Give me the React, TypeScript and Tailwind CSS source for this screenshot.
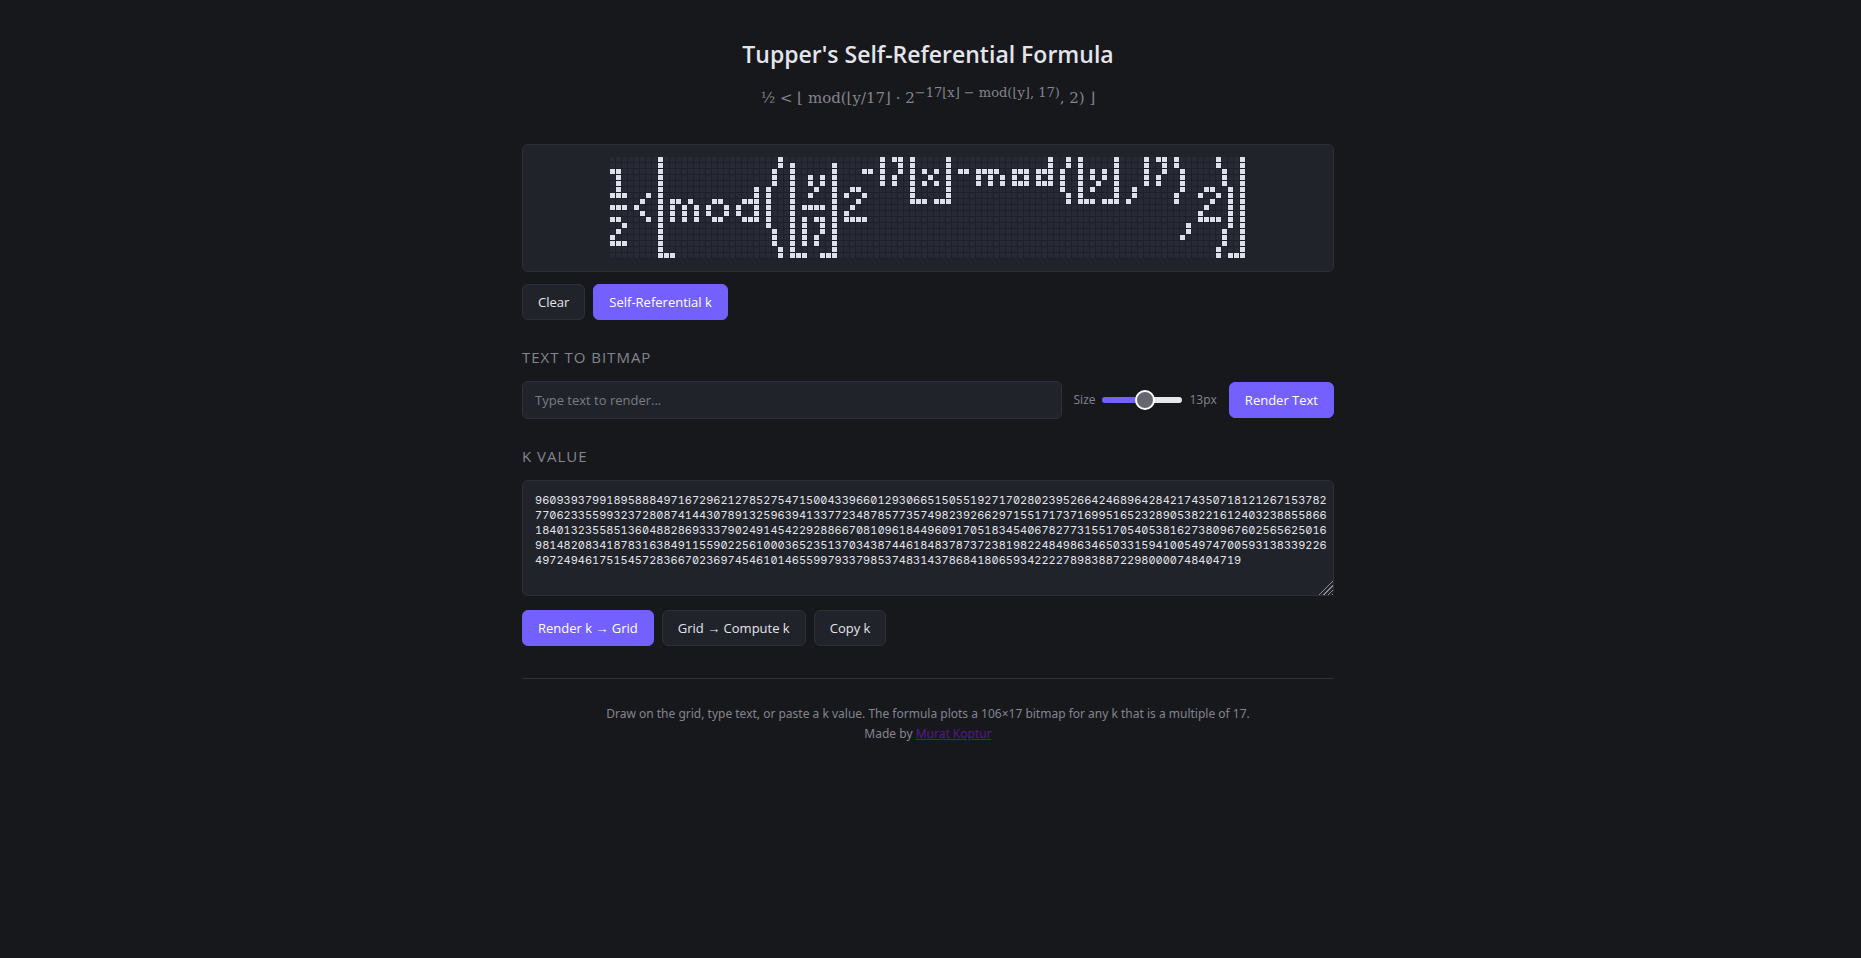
import { useState } from "react"

const COLS = 106
const ROWS = 17
const CELL = 6

const SELF_K = [
    "960939379918958884971672962127852754715004339660129306651505519271702802395266424689642842174350718121267153782",
    "770623355993237280874144307891325963941337723487857735749823926629715517173716995165232890538221612403238855866",
    "184013235585136048828693337902491454229288667081096184496091705183454067827731551705405381627380967602565625016",
    "981482083418783163849115590225610003652351370343874461848378737238198224849863465033159410054974700593138339226",
    "497249461751545728366702369745461014655997933798537483143786841806593422227898388722980000748404719",
].join("")

// bit (17 * x + y) of k / 17 is one pixel, columns run right to left
function decode(k: string): boolean[] {
    const cells: boolean[] = new Array(COLS * ROWS).fill(false)
    let n = BigInt(k.replace(/\D/g, "") || "0") / 17n
    for (let i = 0; i < COLS * ROWS; i++) {
        const col = COLS - 1 - Math.floor(i / ROWS)
        cells[(i % ROWS) * COLS + col] = (n & 1n) === 1n
        n >>= 1n
    }
    return cells
}

function encode(cells: boolean[]): string {
    let n = 0n
    for (let i = COLS * ROWS - 1; i >= 0; i--) {
        const col = COLS - 1 - Math.floor(i / ROWS)
        n = (n << 1n) | (cells[(i % ROWS) * COLS + col] ? 1n : 0n)
    }
    return (n * 17n).toString()
}

const baseButton = "h-9 px-[15px] rounded-md border text-[13px] leading-5 cursor-pointer whitespace-nowrap"
const plainButton = `${baseButton} border-[#2e3038] bg-[#20232a] text-[#e4e4ec]`
const accentButton = `${baseButton} border-[#7460ff] bg-[#7460ff] text-white`
const heading = "mt-[25px] text-[15px] leading-6 tracking-[1px] uppercase text-[#84848f]"

export default function App() {
    const [k, setK] = useState(SELF_K)
    const [cells, setCells] = useState(() => decode(SELF_K))
    const [text, setText] = useState("")
    const [size, setSize] = useState(13)

    function toggle(index: number) {
        setCells(cells.map((on, i) => (i === index ? !on : on)))
    }

    function loadSelf() {
        setK(SELF_K)
        setCells(decode(SELF_K))
    }

    function renderText() {
        const canvas = document.createElement("canvas")
        canvas.width = COLS
        canvas.height = ROWS
        const ctx = canvas.getContext("2d")
        if (!ctx) return
        ctx.font = `${size}px sans-serif`
        ctx.textBaseline = "middle"
        ctx.textAlign = "center"
        ctx.fillText(text, COLS / 2, ROWS / 2)
        const data = ctx.getImageData(0, 0, COLS, ROWS).data
        const next = cells.map((_, i) => data[i * 4 + 3] > 100)
        setCells(next)
        setK(encode(next))
    }

    const percent = ((size - 8) / 9) * 100

    return (
        <div className="min-h-screen bg-[#17181c] pr-[5px] font-['Open_Sans','Noto_Sans',sans-serif] text-[#e4e4ec]">
            <main className="mx-auto max-w-[860px] px-6 pt-9">
                <header className="text-center">
                    <h1 className="text-[23px] leading-9 font-semibold">Tupper's Self-Referential Formula</h1>
                    <p className="mt-3 font-['DejaVu_Serif',serif] text-[15px] leading-7 text-[#84848f]">
                        ½ &lt; ⌊ mod(⌊y/17⌋ · 2<sup className="text-[13px]">−17⌊x⌋ − mod(⌊y⌋, 17)</sup>, 2) ⌋
                    </p>
                </header>

                <div className="mt-8 flex justify-center rounded-md border border-[#2e3038] bg-[#20232a] p-3">
                    <svg
                        className="block"
                        width={COLS * CELL}
                        height={ROWS * CELL}
                        shapeRendering="crispEdges"
                        role="img"
                        aria-label="Bitmap grid"
                    >
                        <rect width={COLS * CELL} height={ROWS * CELL} fill="#1e2029" />
                        {cells.map((on, i) => (
                            <rect
                                key={i}
                                x={(i % COLS) * CELL}
                                y={Math.floor(i / COLS) * CELL}
                                width={CELL - 1}
                                height={CELL - 1}
                                fill={on ? "#e0e0ec" : "#272934"}
                                onClick={() => toggle(i)}
                            />
                        ))}
                    </svg>
                </div>

                <div className="mt-3 flex gap-2">
                    <button type="button" className={plainButton} onClick={() => setCells(cells.map(() => false))}>
                        Clear
                    </button>
                    <button type="button" className={accentButton} onClick={loadSelf}>
                        Self-Referential k
                    </button>
                </div>

                <h2 className={heading}>Text to bitmap</h2>
                <div className="mt-3 flex items-center gap-3">
                    <input
                        className="h-[38px] min-w-0 flex-1 rounded-md border border-[#2e3038] bg-[#20232a] px-3 text-[13px] placeholder:text-[#7b7c83]"
                        type="text"
                        aria-label="Text to render"
                        placeholder="Type text to render..."
                        value={text}
                        onChange={(e) => setText(e.target.value)}
                    />
                    <div className="flex items-center text-xs text-[#84848f]">
                        <label htmlFor="size">Size</label>
                        <input
                            className="mr-2 ml-[6px] h-5 w-20 cursor-pointer appearance-none bg-transparent [&::-webkit-slider-runnable-track]:h-[6px] [&::-webkit-slider-runnable-track]:rounded-full [&::-webkit-slider-runnable-track]:bg-[image:var(--track)] [&::-webkit-slider-thumb]:-mt-[7px] [&::-webkit-slider-thumb]:size-5 [&::-webkit-slider-thumb]:appearance-none [&::-webkit-slider-thumb]:rounded-full [&::-webkit-slider-thumb]:border-2 [&::-webkit-slider-thumb]:border-white [&::-webkit-slider-thumb]:bg-[#67666f]"
                            style={{
                                "--track": `linear-gradient(to right, #7460ff ${percent}%, #e8e8ec ${percent}%)`,
                            } as React.CSSProperties}
                            type="range"
                            id="size"
                            min={8}
                            max={17}
                            value={size}
                            onChange={(e) => setSize(Number(e.target.value))}
                        />
                        <span>{size}px</span>
                    </div>
                    <button type="button" className={accentButton} onClick={renderText}>
                        Render Text
                    </button>
                </div>

                <h2 className={heading}>k value</h2>
                <textarea
                    className="mt-3 block h-[116px] w-full resize-y rounded-md border border-[#2e3038] bg-[#20232a] py-3 pr-1 pl-3 font-['Inter',monospace] text-[11px] leading-[15px] slashed-zero tabular-nums break-all [&::-webkit-resizer]:bg-[linear-gradient(135deg,#20232a_50%,transparent_50%),repeating-linear-gradient(135deg,#20232a_0_2px,#8a8b90_2px_3px)]"
                    aria-label="k value"
                    spellCheck={false}
                    value={k}
                    onChange={(e) => setK(e.target.value)}
                />
                <div className="mt-[14px] flex gap-2">
                    <button type="button" className={accentButton} onClick={() => setCells(decode(k))}>
                        Render k → Grid
                    </button>
                    <button type="button" className={plainButton} onClick={() => setK(encode(cells))}>
                        Grid → Compute k
                    </button>
                    <button type="button" className={plainButton} onClick={() => navigator.clipboard.writeText(k)}>
                        Copy k
                    </button>
                </div>

                <footer className="mt-8 border-t border-[#2e3038] py-[25px] text-center font-['Noto_Sans',sans-serif] text-xs leading-5 text-[#84848f]">
                    <p>Draw on the grid, type text, or paste a k value. The formula plots a 106×17 bitmap for any k that is a multiple of 17.</p>
                    <p>
                        Made by{" "}
                        <a className="text-[#551a8b] underline" href="#">
                            Murat Koptur
                        </a>
                    </p>
                </footer>
            </main>
        </div>
    )
}
